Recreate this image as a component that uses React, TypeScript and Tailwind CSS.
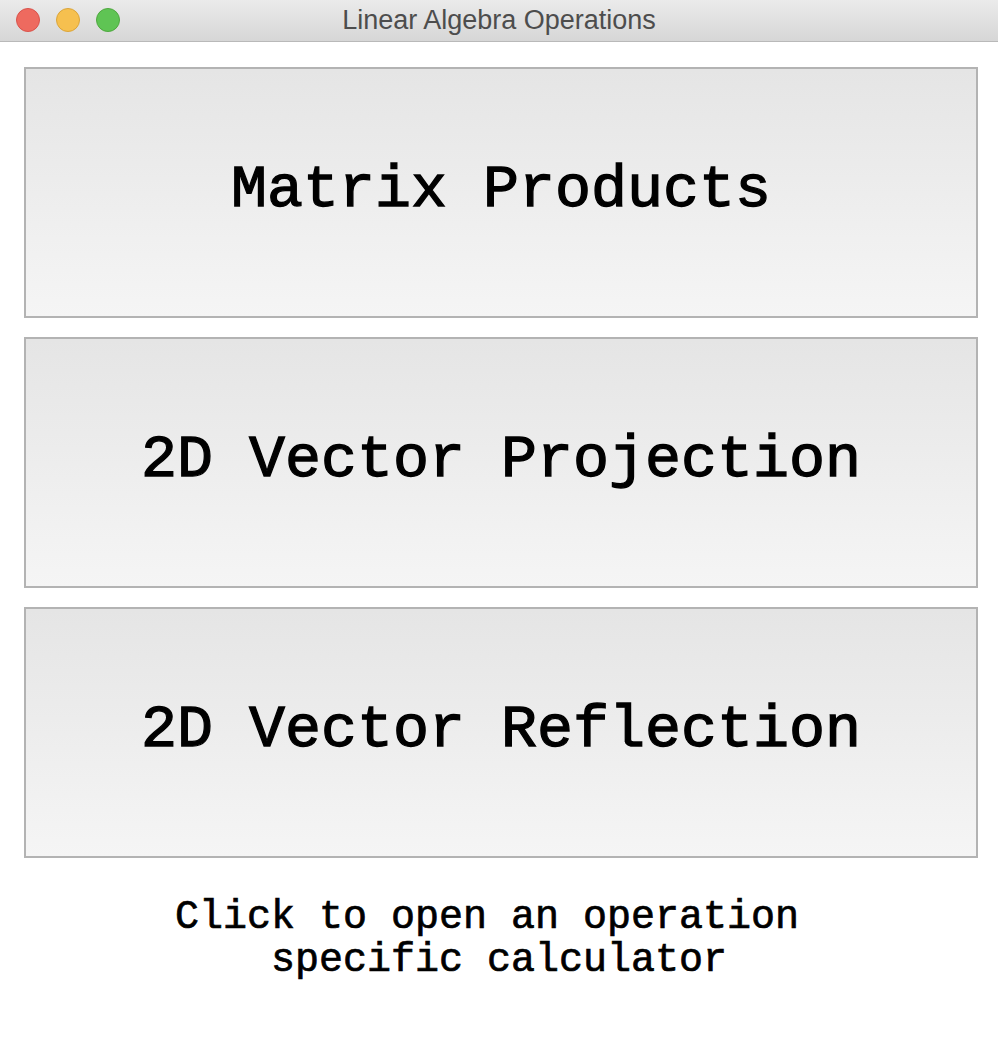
const operations = ["Matrix Products", "2D Vector Projection", "2D Vector Reflection"];

export default function App() {
  return (
    <div className="flex h-[1040px] w-[998px] flex-col overflow-hidden bg-white">
      {/* title bar */}
      <div className="relative flex h-[42px] shrink-0 items-center justify-center border-b border-[#b9b9b9] bg-gradient-to-b from-[#ebebeb] to-[#d6d6d6]">
        <div className="absolute left-[16px] top-[8px] flex gap-[16px]">
          <span className="h-[24px] w-[24px] rounded-full border border-[#d9534c] bg-[#ee6a5f]" />
          <span className="h-[24px] w-[24px] rounded-full border border-[#dba53a] bg-[#f6c04f]" />
          <span className="h-[24px] w-[24px] rounded-full border border-[#4fa83f] bg-[#5fc454]" />
        </div>
        <span className="font-['Liberation_Sans',sans-serif] text-[27px] text-[#4d4d4d]">
          Linear Algebra Operations
        </span>
      </div>

      <div className="ml-[24px] mr-[20px] mt-[25px] flex flex-col gap-[19px]">
        {operations.map((label) => (
          <button
            key={label}
            className="flex h-[251px] items-center justify-center border-2 border-[#b3b3b3] bg-gradient-to-b from-[#e5e5e5] to-[#f5f5f5] pb-[6px] font-['Liberation_Mono',monospace] text-[60px] text-black [-webkit-text-stroke:1.3px_black]"
          >
            {label}
          </button>
        ))}
      </div>

      <p className="mt-[38px] whitespace-pre text-center font-['Liberation_Mono',monospace] text-[40px] leading-[43px] text-black [-webkit-text-stroke:0.7px_black]">
        {"Click to open an operation \nspecific calculator"}
      </p>
    </div>
  );
}
